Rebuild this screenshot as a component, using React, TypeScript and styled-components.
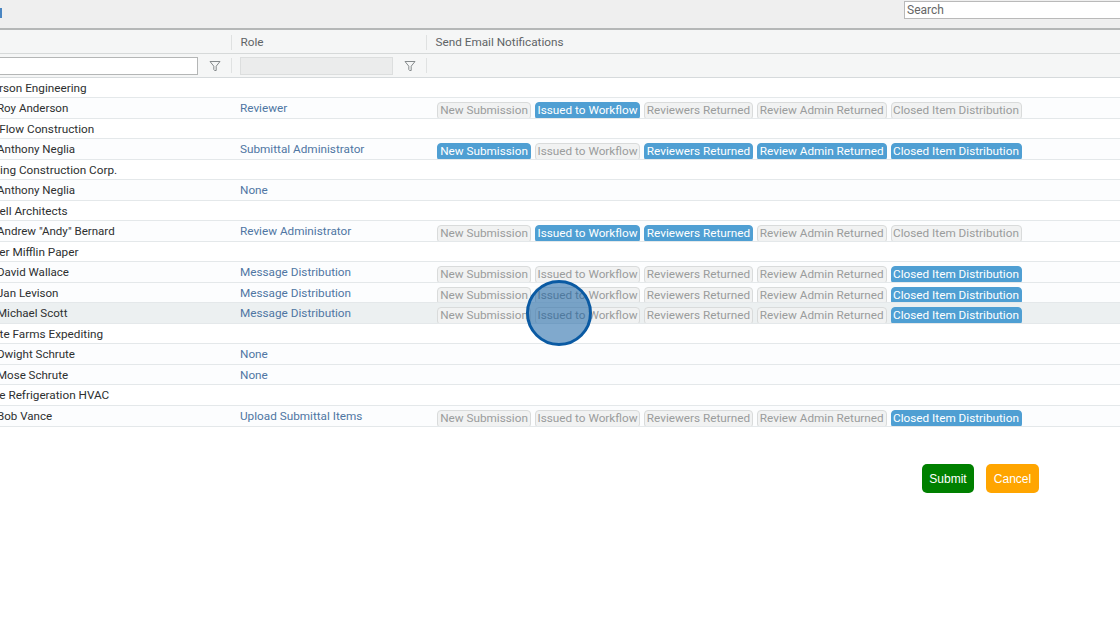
import React from "react";
import styled, { createGlobalStyle } from "styled-components";

const Global = createGlobalStyle`
  html, body { margin: 0; padding: 0; background: #fff; }
  body { width: 1120px; height: 626px; overflow: hidden; font-family: Roboto, "Liberation Sans", sans-serif; }
`;

const Page = styled.div`
  position: relative;
  width: 1120px;
  height: 626px;
  overflow: hidden;
  background: #fff;
`;
const Toolbar = styled.div`
  height: 28px;
  background: #efefef;
  border-bottom: 2px solid #b5b7b7;
  display: flex;
  justify-content: space-between;
  align-items: flex-start;
`;
const BackLink = styled.span`
  display: block;
  width: 2px;
  height: 10px;
  margin-top: 8px;
  background: #4a86c2;
`;
const Search = styled.div`
  box-sizing: border-box;
  width: 230px;
  height: 18px;
  margin: 1px -14px 0 0;
  padding-left: 2px;
  border: 1px solid #b9b9b9;
  background: #fff;
  font-size: 12px;
  line-height: 16px;
  color: #666;
`;
const columns = "231px 195px 1fr";
const HeaderRow = styled.div`
  display: grid;
  grid-template-columns: ${columns};
  height: 23px;
  padding-top: 1px;
  box-sizing: border-box;
  margin-bottom: 1px;
  background: #f5f6f6;
  box-shadow: 0 1px 0 #d6d9d9;
  align-items: center;
`;
const FilterRow = styled.div`
  display: grid;
  grid-template-columns: ${columns};
  box-sizing: border-box;
  height: 24px;
  background: #f5f6f6;
  border-bottom: 1px solid #d6dadc;
  align-items: center;
`;
const HeadCell = styled.div<{ $sep?: boolean }>`
  height: 15px;
  padding-left: ${(p) => (p.$sep ? "8.5px" : "0")};
  border-left: ${(p) => (p.$sep ? "1px solid #dfe1e1" : "none")};
  font-size: 11.75px;
  line-height: 15px;
  color: #5f6466;
`;
const FilterCell = styled.div<{ $sep?: boolean }>`
  display: flex;
  align-items: center;
  height: 15px;
  padding-left: ${(p) => (p.$sep ? "8px" : "0")};
  border-left: ${(p) => (p.$sep ? "1px solid #e0e2e2" : "none")};
`;
const NameInput = styled.div`
  box-sizing: border-box;
  flex: none;
  width: 198px;
  height: 18px;
  background: #fff;
  border: 1px solid #b4b6b6;
  border-left: none;
`;
const RoleInput = styled.div`
  box-sizing: border-box;
  flex: none;
  width: 153px;
  height: 18px;
  background: #ebecec;
  border: 1px solid #dcdede;
`;
const FilterIcon = styled.svg`
  flex: none;
  width: 12px;
  height: 12px;
  margin-left: 11px;
  fill: none;
  stroke: #858a8c;
  stroke-width: 1;
`;
const RowBase = styled.div<{ $hover?: boolean; $group?: boolean; $tall: boolean }>`
  display: grid;
  grid-template-columns: ${columns};
  box-sizing: border-box;
  height: ${(p) => (p.$tall ? "21px" : "20px")};
  border-bottom: 1px solid #e4e8ea;
  background: ${(p) => (p.$hover ? "#ecf0f1" : p.$group ? "#fff" : "#fcfdfe")};
  font-size: 11.75px;
  line-height: 20px;
  overflow: hidden;
`;
const GroupName = styled.div<{ $offset: number }>`
  white-space: nowrap;
  color: #2d2f30;
  margin-left: ${(p) => p.$offset}px;
`;
const PersonName = styled.div`
  white-space: nowrap;
  color: #2d2f30;
  font-size: 11.55px;
  margin-left: -3px;
`;
const RoleCell = styled.div`
  padding-left: 9px;
  color: #4f76a3;
`;
const Tags = styled.div`
  display: flex;
  gap: 4px;
  padding: 4px 0 0 11px;
`;
const Tag = styled.span<{ $on: boolean; $w: number }>`
  box-sizing: border-box;
  flex: none;
  width: ${(p) => p.$w}px;
  height: 18px;
  border-radius: 4px;
  text-align: center;
  font-size: 11.75px;
  line-height: 15px;
  white-space: nowrap;
  border: 1px solid ${(p) => (p.$on ? "#4f9fd3" : "#d9dbdb")};
  background: ${(p) => (p.$on ? "#4f9fd3" : "#f1f2f2")};
  color: ${(p) => (p.$on ? "#fff" : "#9a9c9c")};
`;
const Actions = styled.div`
  display: flex;
  justify-content: flex-end;
  gap: 12px;
  padding: 37px 81px 0 0;
`;
const ActionButton = styled.button<{ $bg: string; $w: number }>`
  width: ${(p) => p.$w}px;
  height: 29px;
  padding: 0;
  border: none;
  border-radius: 5px;
  background: ${(p) => p.$bg};
  color: #fff;
  font-family: "Liberation Sans", Arial, sans-serif;
  font-size: 12px;
`;
const ClickMarker = styled.div`
  position: absolute;
  left: 526px;
  top: 280px;
  box-sizing: border-box;
  width: 66px;
  height: 66px;
  border-radius: 50%;
  border: 3px solid #0a5aa3;
  background: rgba(12, 90, 160, 0.52);
`;

const tagDefs: [string, number][] = [
  ["New Submission", 94],
  ["Issued to Workflow", 105],
  ["Reviewers Returned", 109],
  ["Review Admin Returned", 129.5],
  ["Closed Item Distribution", 131],
];

type Row =
  | { group: string; offset: number }
  | { name: string; role: string; tags?: number[]; hover?: boolean };

const rows: Row[] = [
  { group: "Anderson Engineering", offset: -28 },
  { name: "Roy Anderson", role: "Reviewer", tags: [0, 1, 0, 0, 0] },
  { group: "AquaFlow Construction", offset: -28 },
  { name: "Anthony Neglia", role: "Submittal Administrator", tags: [1, 0, 1, 1, 1] },
  { group: "Dowling Construction Corp.", offset: -26 },
  { name: "Anthony Neglia", role: "None" },
  { group: "Mitchell Architects", offset: -30 },
  { name: 'Andrew "Andy" Bernard', role: "Review Administrator", tags: [0, 1, 1, 0, 0] },
  { group: "Dunder Mifflin Paper", offset: -28 },
  { name: "David Wallace", role: "Message Distribution", tags: [0, 0, 0, 0, 1] },
  { name: "Jan Levison", role: "Message Distribution", tags: [0, 0, 0, 0, 1] },
  { name: "Michael Scott", role: "Message Distribution", tags: [0, 0, 0, 0, 1], hover: true },
  { group: "Schrute Farms Expediting", offset: -30.5 },
  { name: "Dwight Schrute", role: "None" },
  { name: "Mose Schrute", role: "None" },
  { group: "Vance Refrigeration HVAC", offset: -27 },
  { name: "Bob Vance", role: "Upload Submittal Items", tags: [0, 0, 0, 0, 1] },
];

const Funnel = () => (
  <FilterIcon viewBox="0 0 12 12">
    <path d="M1 1.5h10L7.2 6.2v4.3H5.6l-.8-1V6.2z" />
  </FilterIcon>
);

export default function App() {
  return (
    <Page>
      <Global />
      <Toolbar>
        <BackLink />
        <Search>Search</Search>
      </Toolbar>
      <HeaderRow>
        <HeadCell />
        <HeadCell $sep>Role</HeadCell>
        <HeadCell $sep>Send Email Notifications</HeadCell>
      </HeaderRow>
      <FilterRow>
        <FilterCell>
          <NameInput />
          <Funnel />
        </FilterCell>
        <FilterCell $sep>
          <RoleInput />
          <Funnel />
        </FilterCell>
        <FilterCell $sep />
      </FilterRow>
      {rows.map((r, i) =>
        "group" in r ? (
          <RowBase key={i} $group $tall={i % 2 === 1}>
            <GroupName $offset={r.offset}>{r.group}</GroupName>
          </RowBase>
        ) : (
          <RowBase key={i} $hover={r.hover} $tall={i % 2 === 1 || i === rows.length - 1}>
            <PersonName>{r.name}</PersonName>
            <RoleCell>{r.role}</RoleCell>
            {r.tags && (
              <Tags>
                {tagDefs.map(([label, w], t) => (
                  <Tag key={label} $w={w} $on={!!r.tags![t]}>
                    {label}
                  </Tag>
                ))}
              </Tags>
            )}
          </RowBase>
        )
      )}
      <Actions>
        <ActionButton $bg="#008000" $w={52}>Submit</ActionButton>
        <ActionButton $bg="#ffa500" $w={53}>Cancel</ActionButton>
      </Actions>
      <ClickMarker />
    </Page>
  );
}
